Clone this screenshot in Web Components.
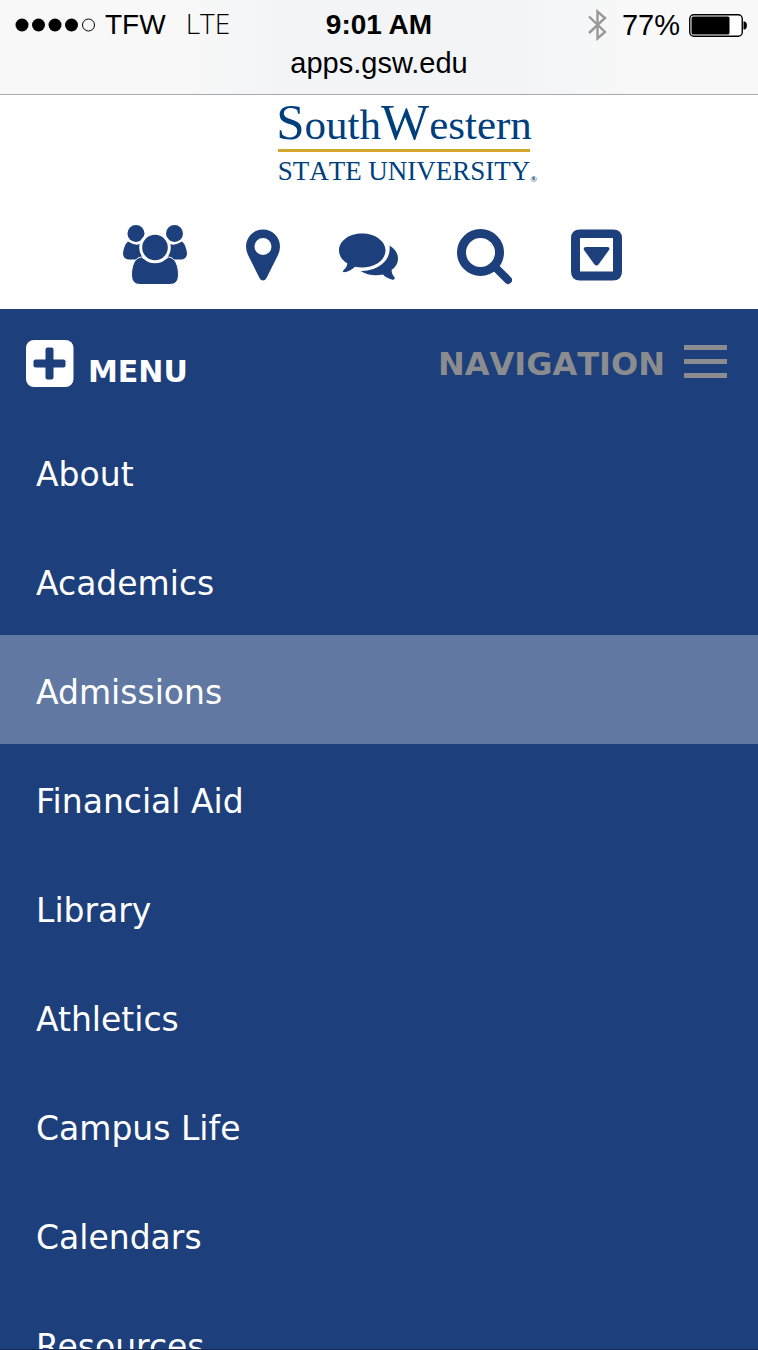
<!DOCTYPE html>
<html lang="en">
<head>
<meta charset="utf-8">
<meta name="viewport" content="width=device-width, initial-scale=1">
<title>SouthWestern State University</title>
<style>
  body { margin: 0; font-family: "DejaVu Sans", Verdana, sans-serif; background: #1d3f7b; }
</style>
</head>
<body>
<campus-app></campus-app>

<template id="t-app">
  <style>
    :host { display: flex; flex-direction: column; height: 100vh; }
    main { flex: 1; min-height: 0; display: flex; flex-direction: column; }
  </style>
  <phone-status></phone-status>
  <main>
    <site-header></site-header>
    <site-menu>
      <menu-item>About</menu-item>
      <menu-item>Academics</menu-item>
      <menu-item active>Admissions</menu-item>
      <menu-item>Financial Aid</menu-item>
      <menu-item>Library</menu-item>
      <menu-item>Athletics</menu-item>
      <menu-item>Campus Life</menu-item>
      <menu-item>Calendars</menu-item>
      <menu-item>Resources</menu-item>
    </site-menu>
  </main>
</template>

<template id="t-status">
  <style>
    :host { display: block; box-sizing: border-box; height: 95px; padding: 6px 11px 0; border-bottom: 1px solid #a9a9ad;
      background: linear-gradient(90deg, #f8f8f8 25%, #f2f4f6 38%, #f2f4f6 68%, #f8f8f8 82%);
      font: 29px/38px "Liberation Sans", Arial, sans-serif; color: #000; }
    .row { display: grid; grid-template-columns: 1fr auto 1fr; align-items: center; height: 38px; }
    .side { display: flex; align-items: center; }
    .left { padding-left: 4px; }
    .right { justify-content: flex-end; gap: 9px; }
    .network { display: flex; align-items: baseline; gap: 20px; margin-left: 8px; }
    .carrier { font-size: 28px; }
    .net { font: 300 28px/34px "Open Sans", sans-serif; }
    .time { font-size: 28px; font-weight: 700; }
    .bt { margin-right: 6px; }
    .url { text-align: center; }
    svg { display: block; }
  </style>
  <div class="row">
    <div class="side left">
      <svg width="82" height="14" viewBox="0 0 82 14" role="img" aria-label="Signal: 4 of 5">
        <circle cx="7" cy="7" r="6.5"/><circle cx="23.500" cy="7" r="6.5"/><circle cx="40" cy="7" r="6.500"/><circle cx="56.500" cy="7" r="6.500"/>
        <circle cx="73.500" cy="7" r="6" fill="none" stroke="#000"/>
      </svg>
      <div class="network"><span class="carrier">TFW</span><span class="net">LTE</span></div>
    </div>
    <div class="time">9:01 AM</div>
    <div class="side right">
      <svg class="bt" width="19" height="32" viewBox="0 0 19 32" fill="none" stroke="#999" stroke-width="2.400" role="img" aria-label="Bluetooth"><path d="M1 7.500 17 23 9.500 29.500V2.500L17 9 1 24"/></svg>
      <span>77%</span>
      <svg width="58" height="23" viewBox="0 0 58 23" role="img" aria-label="Battery"><rect x=".75" y=".75" width="52.500" height="21.500" rx="4" fill="#fff" stroke="#000" stroke-width="1.400"/><rect x="2.500" y="2.500" width="38" height="18" rx="1.500"/><path d="M54.500 7.500h1.500q2 1 2 4t-2 4h-1.500z"/></svg>
    </div>
  </div>
  <div class="url">apps.gsw.edu</div>
</template>

<template id="t-header">
  <style>
    :host { display: block; background: #fff; box-sizing: border-box; height: 214px; flex: none; }
    nav { display: flex; justify-content: center; align-items: center; gap: 59px; height: 60px; margin-top: 41px; padding-right: 13px; }
    nav a { display: block; color: #1d3f7b; }
    svg { display: block; fill: currentColor; }
  </style>
  <site-logo></site-logo>
  <nav aria-label="Quick links">
    <a href="#directory" aria-label="Directory">
      <svg width="64" height="60" viewBox="0 0 64 60">
        <circle cx="13" cy="8.500" r="8.500"/><circle cx="51.500" cy="8.500" r="8.500"/>
        <path d="M5 16.500Q13 21.500 18 18.500Q17.500 27 22 31L17 34.500H5Q0 33.500 0 28Q1 20 5 16.500Z"/>
        <path d="M59 16.500Q51 21.500 46 18.500Q46.500 27 42 31L47 34.500H59Q64 33.500 64 28Q63 20 59 16.500Z"/>
        <path d="M18.500 32Q32 43 45.500 32C52.500 32.500 55.500 41 55.500 50Q55.500 59.500 47 59.500H17Q8.500 59.500 8.500 50C8.500 41 11.500 32.500 18.500 32Z" stroke="#fff" stroke-width="1"/>
        <circle cx="32" cy="22.500" r="14.300" stroke="#fff" stroke-width="3"/>
      </svg>
    </a>
    <a href="#map" aria-label="Campus map">
      <svg width="34" height="60" viewBox="0 0 34 60"><path fill-rule="evenodd" d="M17 4.500a17 17 0 0 1 17 17q0 4-2 8.500L20.500 53Q19 55.500 17 55.500T13.500 53L2 30Q0 25.500 0 21.500a17 17 0 0 1 17-17zm0 8.500a8.500 8.500 0 1 0 0 17 8.500 8.500 0 0 0 0-17z"/></svg>
    </a>
    <a href="#contact" aria-label="Contact">
      <svg width="59" height="60" viewBox="0 0 59 60"><path d="M23 8.500c13 0 23.500 7.500 23.500 17S36 42.500 23 42.500q-4 0-7-.8Q11 46.500 5 47.300q-2-.3-.5-2Q8 42.500 8.500 38.500C3 35.500 0 30.500 0 25.500 0 16 10 8.500 23 8.500z"/><path d="M50.500 20.500C56 24 59 28.500 59 33.500q0 7-6.500 11.500 0 4 3 7.500 1 2.500-2 2.200Q47 53 44 49.500q-3 .7-7 .7-9 0-15.500-4.200 12 .5 21-6.500Q52 32 50.500 20.500z"/></svg>
    </a>
    <a href="#search" aria-label="Search">
      <svg width="55" height="60" viewBox="0 0 55 60"><g fill="none" stroke="currentColor"><circle cx="23.500" cy="27.500" r="19" stroke-width="9"/><path d="M37 41 51 55" stroke-width="8" stroke-linecap="round"/></g></svg>
    </a>
    <a href="#more" aria-label="More">
      <svg width="51" height="60" viewBox="0 0 51 60"><path fill-rule="evenodd" d="M9 4.500h33q9 0 9 9v33q0 9-9 9H9q-9 0-9-9v-33q0-9 9-9zm0 8.500v33.500h33V13z"/><path d="M15 22H36.500q3 .3 1.500 3L27.500 39.500q-2 2-4 0L13 25q-1.200-2.700 2-3z"/></svg>
    </a>
  </nav>
</template>

<template id="t-logo">
  <style>
    :host { display: flex; flex-direction: column; align-items: center; padding-left: 50px; height: 89px;
      font-family: "Liberation Serif", "Times New Roman", serif; color: #003f7d; white-space: nowrap; }
    .name { font-size: 43px; line-height: 54px; height: 54px; flex: none; }
    .cap { font-size: 51px; line-height: 54px; }
    .rule { width: 252px; height: 3px; flex: none; background: #d3a62e; }
    .sub { position: relative; font-size: 27px; line-height: 30px; margin-top: 4px; font-kerning: none; }
    .reg { position: absolute; left: 100%; bottom: 0; font-size: 9px; font-weight: 700; line-height: 14px; }
  </style>
  <div class="name"><span class="cap">S</span>outh<span class="cap">W</span>estern</div>
  <div class="rule"></div>
  <div class="sub">STATE UNIVERSITY<span class="reg">®</span></div>
</template>

<template id="t-menu">
  <style>
    :host { display: block; flex: 1; min-height: 0; overflow-y: auto; scrollbar-width: none; box-sizing: border-box;
      background: #1d3f7b; color: #fff; border-bottom: 1px solid #142b55; }
    .bar { display: flex; justify-content: space-between; align-items: flex-start; height: 108px; padding: 31px 31px 0 26px; box-sizing: border-box; }
    button { display: flex; align-items: flex-start; border: 0; padding: 0; margin: 0; background: none; color: #fff;
      font: 700 30px/46px "DejaVu Sans", Verdana, sans-serif; }
    .menu { gap: 14px; }
    .menu span { margin-top: 9px; }
    .nav { gap: 19px; font-size: 32px; font-kerning: none; color: #8b8c8f; }
    .nav span { margin-top: 1px; }
    .nav svg { margin-top: 5px; }
    svg { display: block; }
    .list { display: block; }
  </style>
  <div class="bar">
    <button class="menu" type="button"><svg width="48" height="48" viewBox="0 0 48 48"><rect width="47.500" height="47" rx="8" fill="#fff"/><g fill="#1d3f7b"><rect x="19.500" y="7.500" width="8" height="32" rx="2"/><rect x="7.500" y="19.500" width="32" height="8" rx="2"/></g></svg><span>MENU</span></button>
    <button class="nav" type="button"><span>NAVIGATION</span><svg width="43" height="34" viewBox="0 0 43 34" fill="currentColor"><path d="M0 0h43v5H0zM0 14h43v5H0zM0 28h43v5H0z"/></svg></button>
  </div>
  <nav class="list" aria-label="Main menu"><slot></slot></nav>
</template>

<template id="t-item">
  <style>
    :host { display: block; }
    :host([active]) { background: #6179a2; }
    a { display: block; padding: 35px 36px 29px; font-size: 33px; line-height: 45px; color: #fff; text-decoration: none; }
  </style>
  <a href="#"><slot></slot></a>
</template>

<script>
  const define = (name, templateId) => {
    customElements.define(name, class extends HTMLElement {
      constructor() {
        super();
        this.attachShadow({ mode: "open" })
          .append(document.getElementById(templateId).content.cloneNode(true));
      }
    });
  };
  define("menu-item", "t-item");
  define("site-menu", "t-menu");
  define("site-logo", "t-logo");
  define("site-header", "t-header");
  define("phone-status", "t-status");
  define("campus-app", "t-app");
</script>
</body>
</html>
